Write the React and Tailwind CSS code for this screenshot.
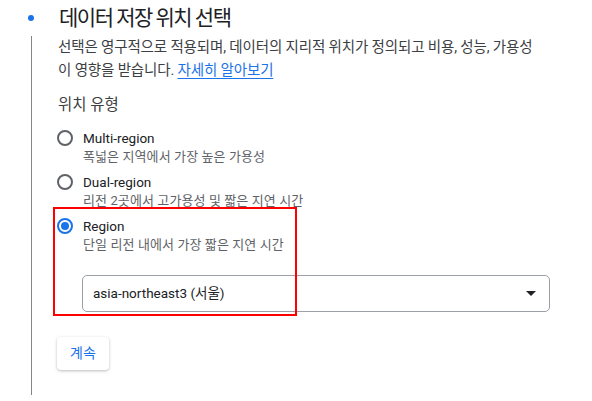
import React from 'react';

const options = [
  { label: 'Multi-region', sub: '폭넓은 지역에서 가장 높은 가용성', checked: false },
  { label: 'Dual-region', sub: '리전 2곳에서 고가용성 및 짧은 지연 시간', checked: false },
  { label: 'Region', sub: '단일 리전 내에서 가장 짧은 지연 시간', checked: true },
];

function Radio({ checked }) {
  return (
    <span
      className={`mt-[2px] flex h-[16px] w-[16px] shrink-0 items-center justify-center rounded-full border-2 ${
        checked ? 'border-[#1a73e8]' : 'border-[#5f6368]'
      }`}
    >
      {checked && <span className="h-[8px] w-[8px] rounded-full bg-[#1a73e8]" />}
    </span>
  );
}

export default function App() {
  return (
    <div
      className="relative h-[401px] w-[592px] overflow-hidden bg-white"
      style={{ fontFamily: 'Roboto, "Noto Sans CJK KR", sans-serif' }}
    >
      {/* Header */}
      <div className="flex h-[36px] items-center">
        <span className="ml-[28px] h-[6px] w-[6px] rounded-full bg-[#1a73e8]" />
        <h1 className="ml-[25px] text-[21px] leading-[28px] tracking-[-1.5px] text-[#202124]">데이터 저장 위치 선택</h1>
      </div>

      {/* Body */}
      <div className="ml-[31px] h-[359px] border-l border-[#80868b] pl-[26px]">
        <p className="whitespace-nowrap text-[14.5px] leading-[23px] tracking-[-0.15px] text-[#3c4043]">
          선택은 영구적으로 적용되며, 데이터의 지리적 위치가 정의되고 비용, 성능, 가용성
          <br />
          이 영향을 받습니다.{' '}
          <a className="text-[#1a73e8] underline underline-offset-[3px]">자세히 알아보기</a>
        </p>

        <div className="mt-[12px] text-[15.5px] leading-[22px] text-[#3c4043]">위치 유형</div>

        <div className="mt-[12px] flex flex-col gap-[6px]">
          {options.map((o) => (
            <div key={o.label} className="-ml-[1px] flex gap-[10px]">
              <Radio checked={o.checked} />
              <div>
                <div className="text-[13.5px] leading-[20px] text-[#202124]">{o.label}</div>
                <div className="text-[13px] leading-[18px] tracking-[0.1px] text-[#5f6368]">{o.sub}</div>
              </div>
            </div>
          ))}
        </div>

        <div className="ml-[24px] mt-[21px] flex h-[37px] w-[468px] items-center justify-between rounded-[5px] border border-[#9aa0a6] pl-[10px] pr-[13px]">
          <span className="text-[13.5px] text-[#202124]">asia-northeast3 (서울)</span>
          <span className="h-0 w-0 border-x-[5.5px] border-t-[5px] border-x-transparent border-t-[#202124]" />
        </div>

        <button className="-ml-[1px] mt-[25px] h-[33px] w-[52px] rounded-[4px] bg-white text-[14px] text-[#1a73e8] shadow-[0_1px_3px_rgba(60,64,67,0.35)]">
          계속
        </button>
      </div>

      {/* Annotation box */}
      <div className="pointer-events-none absolute left-[53px] top-[207px] h-[109px] w-[244px] border-[2.5px] border-[#ff0000]" />
    </div>
  );
}
